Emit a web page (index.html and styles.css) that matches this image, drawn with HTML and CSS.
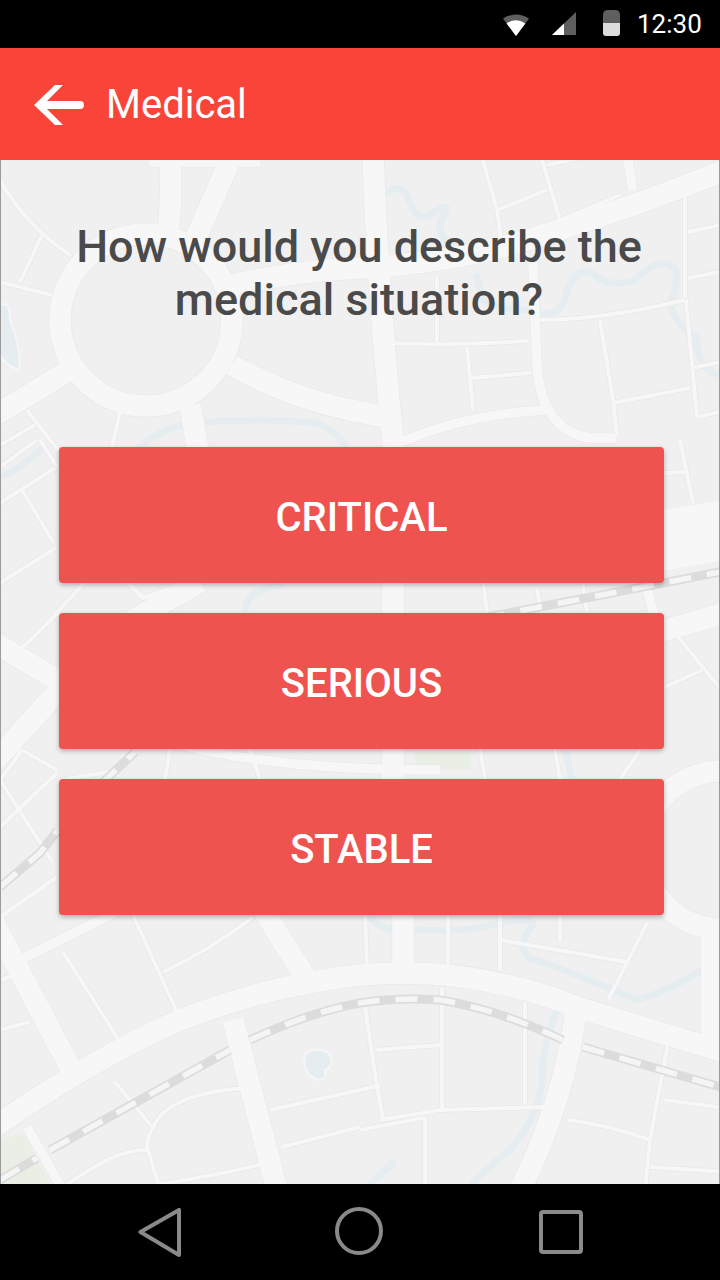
FILE: index.html
```html
<!DOCTYPE html>
<html lang="en">
<head>
<meta charset="utf-8">
<title>Medical</title>
<link rel="stylesheet" href="styles.css">
</head>
<body>
<div class="phone">
  <div class="status">
    <svg class="ic-wifi" width="26" height="24" viewBox="0 0 26 24"><path class="s-dim" d="M0 6.500Q13-1.500 26 6.500L13 24Z"/><path class="s-on" d="M3.600 11.400Q13 5.200 22.400 11.400L13 24Z"/></svg>
    <svg class="ic-signal" width="24" height="24" viewBox="0 0 24 24"><path class="s-dim" d="M24 0V23H0Z"/><path class="s-on" d="M0 23L12 11.500V23Z"/></svg>
    <svg class="ic-batt" width="17" height="26" viewBox="0 0 17 26"><path class="s-dim" d="M0 13V5Q0 0 5 0H12Q17 0 17 5V13Z"/><path class="s-full" d="M0 13H17V23Q17 26 14 26H3Q0 26 0 23Z"/></svg>
    <span class="clock">12:30</span>
  </div>
  <header class="bar">
    <svg class="ic-back" width="50" height="40" viewBox="0 0 50 40"><path d="M0 20L21 0H29L13 16H46A4 4 0 0 1 46 24H13L29 40H21Z"/></svg>
    <h1 class="bar-title">Medical</h1>
  </header>
  <main class="screen">
    <svg class="map" width="718" height="1024" viewBox="1 160 718 1024" aria-hidden="true">
      <defs>
        <g id="major">
          <circle cx="146" cy="320" r="86"/>
          <path d="M168 235Q172 200 170 155"/>
          <path d="M195 240Q215 195 232 155"/>
          <path d="M150 156H260"/>
          <path d="M-10 418Q30 395 66 372"/>
          <path d="M190 405L198 450"/>
          <path d="M232 365Q300 405 395 418"/>
          <path d="M232 285Q300 270 360 268Q460 262 540 236Q640 205 725 170"/>
          <path d="M373 155Q378 300 394 450"/>
          <path d="M-10 640L57 680L110 650"/>
          <path d="M-10 766L50 700L133 620L200 582"/>
          <path d="M393 575V625M393 745V785"/>
          <path class="wide" d="M655 542L725 530"/>
          <path d="M655 633L725 613"/>
          <circle cx="722" cy="850" r="79"/>
          <path d="M-10 1130Q90 1060 180 1020Q270 985 360 975Q470 965 577 1007Q650 1030 725 1052"/>
          <path d="M-10 915L73 1073"/>
          <path d="M233 1020L277 1190"/>
          <path d="M260 905L307 980"/>
          <path d="M403 905V970"/>
          <path d="M712 925V1040"/>
          <path d="M577 1005Q565 1100 520 1190"/>
        </g>
        <g id="medium">
          <path d="M533 263L537 367Q542 430 590 438H616"/>
          <path d="M395 445Q460 415 545 410"/>
          <path d="M627 155L633 190"/>
          <path d="M643 575L657 625"/>
          <path d="M10 965L130 905"/>
          <path d="M27 1127L63 1190"/>
          <path d="M180 745Q280 770 440 770"/>
        </g>
        <g id="minor">
          <path d="M0 180Q25 225 70 255"/>
          <path d="M42 235L20 282M0 282L52 295"/>
          <path d="M120 413L112 447M27 410L58 450M0 445L35 425"/>
          <path d="M483 160L497 210L503 253M497 210L547 190M542 160L560 220M547 165L595 155M560 220L620 195"/>
          <path d="M685 193V297M688 232L720 225M688 278L720 272"/>
          <path d="M540 320Q600 320 685 300M600 320L613 400L617 437M613 403L690 388M686 300L697 417M692 368L720 362M697 417L720 412"/>
          <path d="M385 343Q450 346 527 341M437 277V342M467 347L473 410M470 378L530 373"/>
          <path d="M0 467L37 440M0 503L55 468M22 490L53 542M0 583L57 547M20 650L58 613M40 440L58 468"/>
          <path d="M0 780L53 863M22 750L57 770M0 827L57 773M22 750L0 780M0 917L57 877"/>
          <path d="M680 440L693 503M665 473L685 472M678 637L720 688M665 687L702 670"/>
          <path d="M127 582L143 598L190 582M85 582L50 620M483 582L488 620M537 588L541 612M583 585L587 612"/>
          <path d="M120 770L60 780M480 749L485 779M555 749L560 779M640 750L620 779M250 750L260 779M170 749L165 779"/>
          <path d="M63 952L125 1050M133 915L182 1023M163 972Q210 950 253 917M0 1030L30 1022M0 980L30 970"/>
          <path d="M115 1082L153 1128Q145 1140 148 1150L160 1190M153 1128Q165 1095 243 1088M148 1150Q115 1148 60 1190"/>
          <path d="M270 1110L360 1090M282 1147L360 1127M160 1184Q220 1175 267 1163"/>
          <path d="M442 988V1110M525 1002V1105M365 1005Q372 1060 383 1120M377 1050L440 1045M360 1090L380 1085"/>
          <path d="M380 1120L440 1110L547 1107M360 1130L423 1118M425 1118V1190"/>
          <path d="M567 1120Q610 1125 650 1140M668 1043L650 1140L645 1190M665 1100L725 1108M650 1167L725 1172"/>
          <path d="M365 910L367 967M448 910V967M500 910V970M560 910V942M500 940L627 962M647 923L608 1000"/>
        </g>
      </defs>

      <rect class="land" x="0" y="160" width="720" height="1024"/>
      <path class="park" d="M0 1140L23 1133L50 1184H0Z"/>
      <path class="park" d="M415 752H470V770H415Z"/>

      <g class="water">
        <path d="M387 193Q400 182 408 198Q415 222 430 215Q450 200 446 213Q432 228 450 245"/>
        <path d="M477 277L483 300Q500 310 527 310Q555 322 565 300Q570 270 590 272Q610 290 635 280Q660 255 675 268Q680 285 670 303Q675 325 697 337Q695 365 720 377"/>
        <path d="M140 447Q165 425 200 422Q270 418 317 423Q335 430 345 445"/>
        <path d="M0 477Q20 470 40 450"/>
        <path d="M245 612Q245 590 280 585"/>
        <path d="M565 749L572 779"/>
        <path d="M370 917Q385 935 420 930Q470 932 500 923Q530 915 533 925Q515 945 530 958Q580 975 637 1000Q670 990 702 970"/>
        <path d="M557 1010Q545 1040 543 1060Q545 1110 510 1150Q490 1165 473 1184"/>
        <path d="M393 1163L370 1184"/>
      </g>
      <path class="pond" d="M0 305Q10 300 10 320Q22 350 19 370Q5 365 0 355Z"/>
      <path class="pond" d="M312 1050Q330 1047 332 1062Q330 1068 325 1070Q328 1080 318 1080Q306 1076 304 1062Q304 1052 312 1050Z"/>

      <use href="#major" class="edge-major"/>
      <use href="#medium" class="edge-medium"/>
      <use href="#minor" class="edge-minor"/>
      <use href="#major" class="road-major"/>
      <use href="#medium" class="road-medium"/>
      <use href="#minor" class="road-minor"/>

      <g class="rail">
        <path d="M0 887L40 853L58 830"/>
        <path d="M100 785L135 752"/>
        <path d="M483 618L720 572"/>
        <path d="M0 1180L37 1158"/>
        <path d="M50 1150L230 1050"/>
        <path d="M250 1040Q310 1012 360 1003Q400 997 440 1000Q500 1010 563 1040"/>
        <path d="M583 1047L720 1087"/>
      </g>
      <g class="rail-dash">
        <path d="M0 887L40 853L58 830"/>
        <path d="M100 785L135 752"/>
        <path d="M483 618L720 572"/>
        <path d="M0 1180L37 1158"/>
        <path d="M50 1150L230 1050"/>
        <path d="M250 1040Q310 1012 360 1003Q400 997 440 1000Q500 1010 563 1040"/>
        <path d="M583 1047L720 1087"/>
      </g>
    </svg>

    <h2 class="question">How would you describe the medical situation?</h2>
    <div class="options">
      <button class="option" type="button">CRITICAL</button>
      <button class="option" type="button">SERIOUS</button>
      <button class="option" type="button">STABLE</button>
    </div>
  </main>
  <nav class="nav">
    <svg class="nav-back" width="44" height="50" viewBox="0 0 44 50"><path d="M2.500 24L41 2V47Z"/></svg>
    <svg class="nav-home" width="48" height="48" viewBox="0 0 48 48"><circle cx="24" cy="24" r="22"/></svg>
    <svg class="nav-recent" width="44" height="44" viewBox="0 0 44 44"><rect x="2" y="2" width="40" height="40" rx="2"/></svg>
  </nav>
</div>
</body>
</html>
```

FILE: styles.css
```css
* { box-sizing: border-box; }
html, body { margin: 0; padding: 0; background: #000; }
.phone {
  width: 720px;
  height: 1280px;
  display: flex;
  flex-direction: column;
  overflow: hidden;
  font-family: Roboto, "Liberation Sans", sans-serif;
}

/* status bar */
.status {
  height: 48px;
  flex: none;
  background: #000;
  display: flex;
  align-items: flex-start;
  padding-left: 503px;
}
.s-dim { fill: #5f5f5f; }
.s-on { fill: #fff; }
.s-full { fill: #dcdcdc; }
.ic-wifi { margin-top: 12px; flex: none; }
.ic-signal { margin: 12px 0 0 23px; flex: none; }
.ic-batt { margin: 10px 0 0 27px; flex: none; }
.clock {
  margin-left: 17px;
  color: #fff;
  font-size: 26px;
  line-height: 48px;
  white-space: nowrap;
}

/* app bar */
.bar {
  height: 112px;
  flex: none;
  background: #f94539;
  display: flex;
  align-items: center;
  padding-left: 34px;
}
.ic-back { fill: #fff; flex: none; margin-top: 2px; }
.bar-title {
  margin: 2px 0 0 22px;
  font-size: 40px;
  font-weight: 400;
  color: #fff;
  line-height: 1;
}

/* main */
.screen {
  position: relative;
  flex: 1;
  background: #f0f0f0;
  padding-top: 60px;
  border-left: 1px solid #9a9a9a;
  border-right: 1px solid #9a9a9a;
}
.map { position: absolute; left: 0; top: 0; display: block; fill: none; stroke-linecap: butt; stroke-linejoin: round; }
.land { fill: #f0f0f0; stroke: none; }
.park { fill: #e9efe4; stroke: none; }
.water path { stroke: #e6edf0; stroke-width: 7; fill: none; stroke-linecap: round; }
.pond { fill: #e6edf0; stroke: #f6f6f6; stroke-width: 2; }
.edge-major { stroke: #e9e9e9; stroke-width: 23; }
.road-major { stroke: #f7f7f7; stroke-width: 21.5; }
.edge-medium { stroke: #e9e9e9; stroke-width: 11; }
.road-medium { stroke: #f7f7f7; stroke-width: 9.5; }
.edge-minor { stroke: #e8e8e8; stroke-width: 5.5; }
.road-minor { stroke: #f7f7f7; stroke-width: 4; }
.wide { stroke-width: 60; }
.rail path { stroke: #dcdcdc; stroke-width: 9; fill: none; }
.rail-dash path { stroke: #f5f5f5; stroke-width: 5.5; fill: none; stroke-dasharray: 22 16; }

.question {
  position: relative;
  margin: 0 0 0 -1px;
  width: 718px;
  padding: 0 59px;
  font-size: 45px;
  line-height: 53px;
  font-weight: 500;
  color: #4a4a4a;
  text-align: center;
}
.options {
  position: relative;
  margin: 121px 0 0 58px;
  width: 605px;
  display: flex;
  flex-direction: column;
  gap: 30px;
}
.option {
  height: 136px;
  border: 0;
  border-radius: 4px;
  background: #ef5350;
  color: #fff;
  font-family: inherit;
  font-size: 40px;
  font-weight: 500;
  box-shadow: 0 2px 5px rgba(0, 0, 0, 0.28);
  padding: 4px 0 0;
}

/* system nav */
.nav {
  height: 96px;
  flex: none;
  background: #000;
  display: flex;
  align-items: flex-start;
  padding: 25px 0 0 138px;
}
.nav svg { fill: none; stroke: #8a8a8a; stroke-width: 4; stroke-linejoin: round; flex: none; }
.nav-back { margin-top: -1px; }
.nav-home { margin: -2px 0 0 153px; }
.nav-recent { margin: 1px 0 0 156px; }
```
